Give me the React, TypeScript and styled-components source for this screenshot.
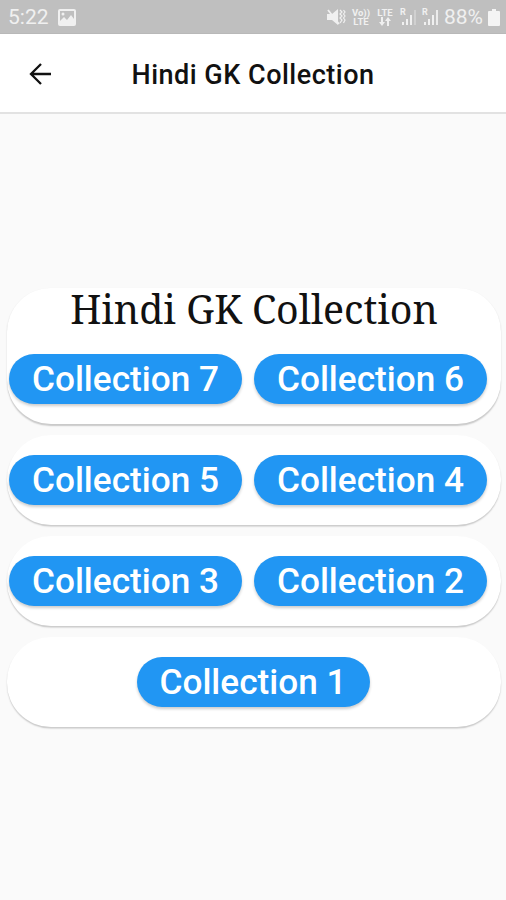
import React from "react";
import styled, { createGlobalStyle } from "styled-components";

const GlobalStyle = createGlobalStyle`
  * { box-sizing: border-box; }
  body { margin: 0; background: #fafafa; font-family: Roboto, sans-serif; }
`;

const Screen = styled.div`
  width: 506px;
  height: 900px;
  display: flex;
  flex-direction: column;
  overflow: hidden;
  background: #fafafa;
`;

const StatusBar = styled.div`
  height: 34px;
  flex: none;
  display: flex;
  align-items: center;
  justify-content: space-between;
  padding: 1px 6px 0 8px;
  background: #bfbfbf;
  border-bottom: 1px solid #b8b8b8;
  color: #f0f0f0;
`;

const StatusGroup = styled.div<{ $gap: number }>`
  display: flex;
  align-items: center;
  gap: ${(p) => p.$gap}px;
`;

const StatusText = styled.span<{ $width: number }>`
  width: ${(p) => p.$width}px;
  font-size: 21px;
  line-height: 32px;
  white-space: nowrap;
`;

const AppBar = styled.header`
  height: 80px;
  flex: none;
  display: grid;
  grid-template-columns: 80px 1fr 80px;
  align-items: center;
  background: #fff;
  border-bottom: 2px solid #e2e2e2;
`;

const BackButton = styled.button`
  height: 78px;
  padding: 1px 0 0;
  border: 0;
  background: none;
  display: flex;
  align-items: center;
  justify-content: center;
`;

const AppTitle = styled.h1`
  margin: 0;
  padding-top: 3px;
  text-align: center;
  font-size: 27px;
  font-weight: 500;
  line-height: 32px;
  letter-spacing: 0.5px;
  white-space: nowrap;
  color: #111;
`;

const Content = styled.main`
  flex: 1;
  display: flex;
  flex-direction: column;
  gap: 11px;
  padding: 174px 5px 0 7px;
`;

const Card = styled.section`
  padding: 20px 2px;
  border-radius: 44px;
  background: #fff;
  box-shadow: 0 1.5px 1.5px rgba(0, 0, 0, 0.2);
`;

const HeadCard = styled(Card)`
  padding-top: 0;
`;

const CardTitle = styled.h2`
  margin: 0;
  height: 66px;
  display: flex;
  justify-content: center;
  font-family: "Noto Serif", "DejaVu Serif Condensed", "DejaVu Serif", serif;
  font-stretch: condensed;
  font-size: 39.3px;
  font-weight: 400;
  line-height: 43px;
  white-space: nowrap;
  color: #111;
`;

const Row = styled.div<{ $center?: boolean }>`
  display: flex;
  justify-content: ${(p) => (p.$center ? "center" : "flex-start")};
  padding-right: ${(p) => (p.$center ? 2 : 0)}px;
  gap: 12px;
`;

const Pill = styled.button`
  width: 233px;
  height: 50.1px;
  padding: 0;
  border: 0;
  border-radius: 26px;
  background: #2196f3;
  box-shadow: 0 2px 3px rgba(0, 0, 0, 0.2);
  color: #fff;
  font-family: Roboto, sans-serif;
  font-size: 35.2px;
  font-weight: 500;
  line-height: 50px;
  white-space: nowrap;
`;

const rows = [[5, 4], [3, 2], [1]];

const ImageIcon = () => (
  <svg width="18" height="17" viewBox="0 0 18 17">
    <path
      fill="#f0f0f0"
      fillRule="evenodd"
      d="M2 0h14a2 2 0 0 1 2 2v13a2 2 0 0 1-2 2H2a2 2 0 0 1-2-2V2a2 2 0 0 1 2-2Zm0 2v10l4-4 3 3 4-5 3 4V2H2Zm3 1.5a1.5 1.5 0 1 1 0 3 1.5 1.5 0 0 1 0-3Z"
    />
  </svg>
);

const MuteIcon = () => (
  <svg width="19" height="18" viewBox="0 0 19 18" fill="none" stroke="#f0f0f0">
    <path fill="#f0f0f0" stroke="none" d="M0 6h5l6-5v16l-6-5H0z" />
    <path d="M1 2l11 14" strokeWidth="1.8" />
    <path d="M13 2l2 2-2 2 2 2-2 2 2 2-2 3M16.5 2l1.5 2-1.5 2 1.5 2-1.5 2 1.5 2-1.5 3" strokeWidth="1.2" />
  </svg>
);

const Badge = styled.div`
  width: 18px;
  height: 19px;
  display: flex;
  flex-direction: column;
  align-items: center;
  font-size: 9.5px;
  font-weight: 700;
  line-height: 9.5px;
`;

const DataArrows = () => (
  <svg width="14" height="9" viewBox="0 0 14 9" fill="#f0f0f0">
    <path d="M3 0h2v5h2L4 9 1 5h2zM10 0l3 4h-2v5H9V4H7z" />
  </svg>
);

const SignalSlot = styled.div`
  width: 16px;
  height: 18px;
  display: grid;
  line-height: 9px;
  font-size: 9px;
  font-weight: 700;

  > * {
    grid-area: 1 / 1;
  }
`;

const Signal = ({ full }: { full?: boolean }) => (
  <SignalSlot>
    <span>R</span>
    <svg width="16" height="18" viewBox="0 0 16 18" fill="#f0f0f0">
      <path d="M2 14h2v3H2zM6 11h2v6H6zM10 7h2v10h-2z" />
      <path d="M14 2h2v15h-2z" opacity={full ? 0.9 : 0.35} />
    </svg>
  </SignalSlot>
);

const BatteryIcon = () => (
  <svg width="12" height="17" viewBox="0 0 12 17">
    <path fill="#f4f4f4" d="M4 0h4v2h3a1 1 0 0 1 1 1v13a1 1 0 0 1-1 1H1a1 1 0 0 1-1-1V3a1 1 0 0 1 1-1h3z" />
  </svg>
);

const BackIcon = () => (
  <svg width="24" height="24" viewBox="0 0 24 24" fill="none" stroke="#111" strokeWidth="2.3">
    <path d="M23 12H3M13 2 3 12l10 10" />
  </svg>
);

export default function App() {
  return (
    <Screen>
      <GlobalStyle />
      <StatusBar>
        <StatusGroup $gap={10}>
          <StatusText $width={40}>5:22</StatusText>
          <ImageIcon />
        </StatusGroup>
        <StatusGroup $gap={6}>
          <MuteIcon />
          <Badge>
            <span>Vo))</span>
            <span>LTE</span>
          </Badge>
          <Badge>
            <span>LTE</span>
            <DataArrows />
          </Badge>
          <Signal />
          <Signal full />
          <StatusText $width={38}>88%</StatusText>
          <BatteryIcon />
        </StatusGroup>
      </StatusBar>
      <AppBar>
        <BackButton aria-label="Back">
          <BackIcon />
        </BackButton>
        <AppTitle>Hindi GK Collection</AppTitle>
      </AppBar>
      <Content>
        <HeadCard>
          <CardTitle>Hindi GK Collection</CardTitle>
          <Row>
            <Pill>Collection 7</Pill>
            <Pill>Collection 6</Pill>
          </Row>
        </HeadCard>
        {rows.map((row) => (
          <Card key={row[0]}>
            <Row $center={row.length === 1}>
              {row.map((n) => (
                <Pill key={n}>Collection {n}</Pill>
              ))}
            </Row>
          </Card>
        ))}
      </Content>
    </Screen>
  );
}
